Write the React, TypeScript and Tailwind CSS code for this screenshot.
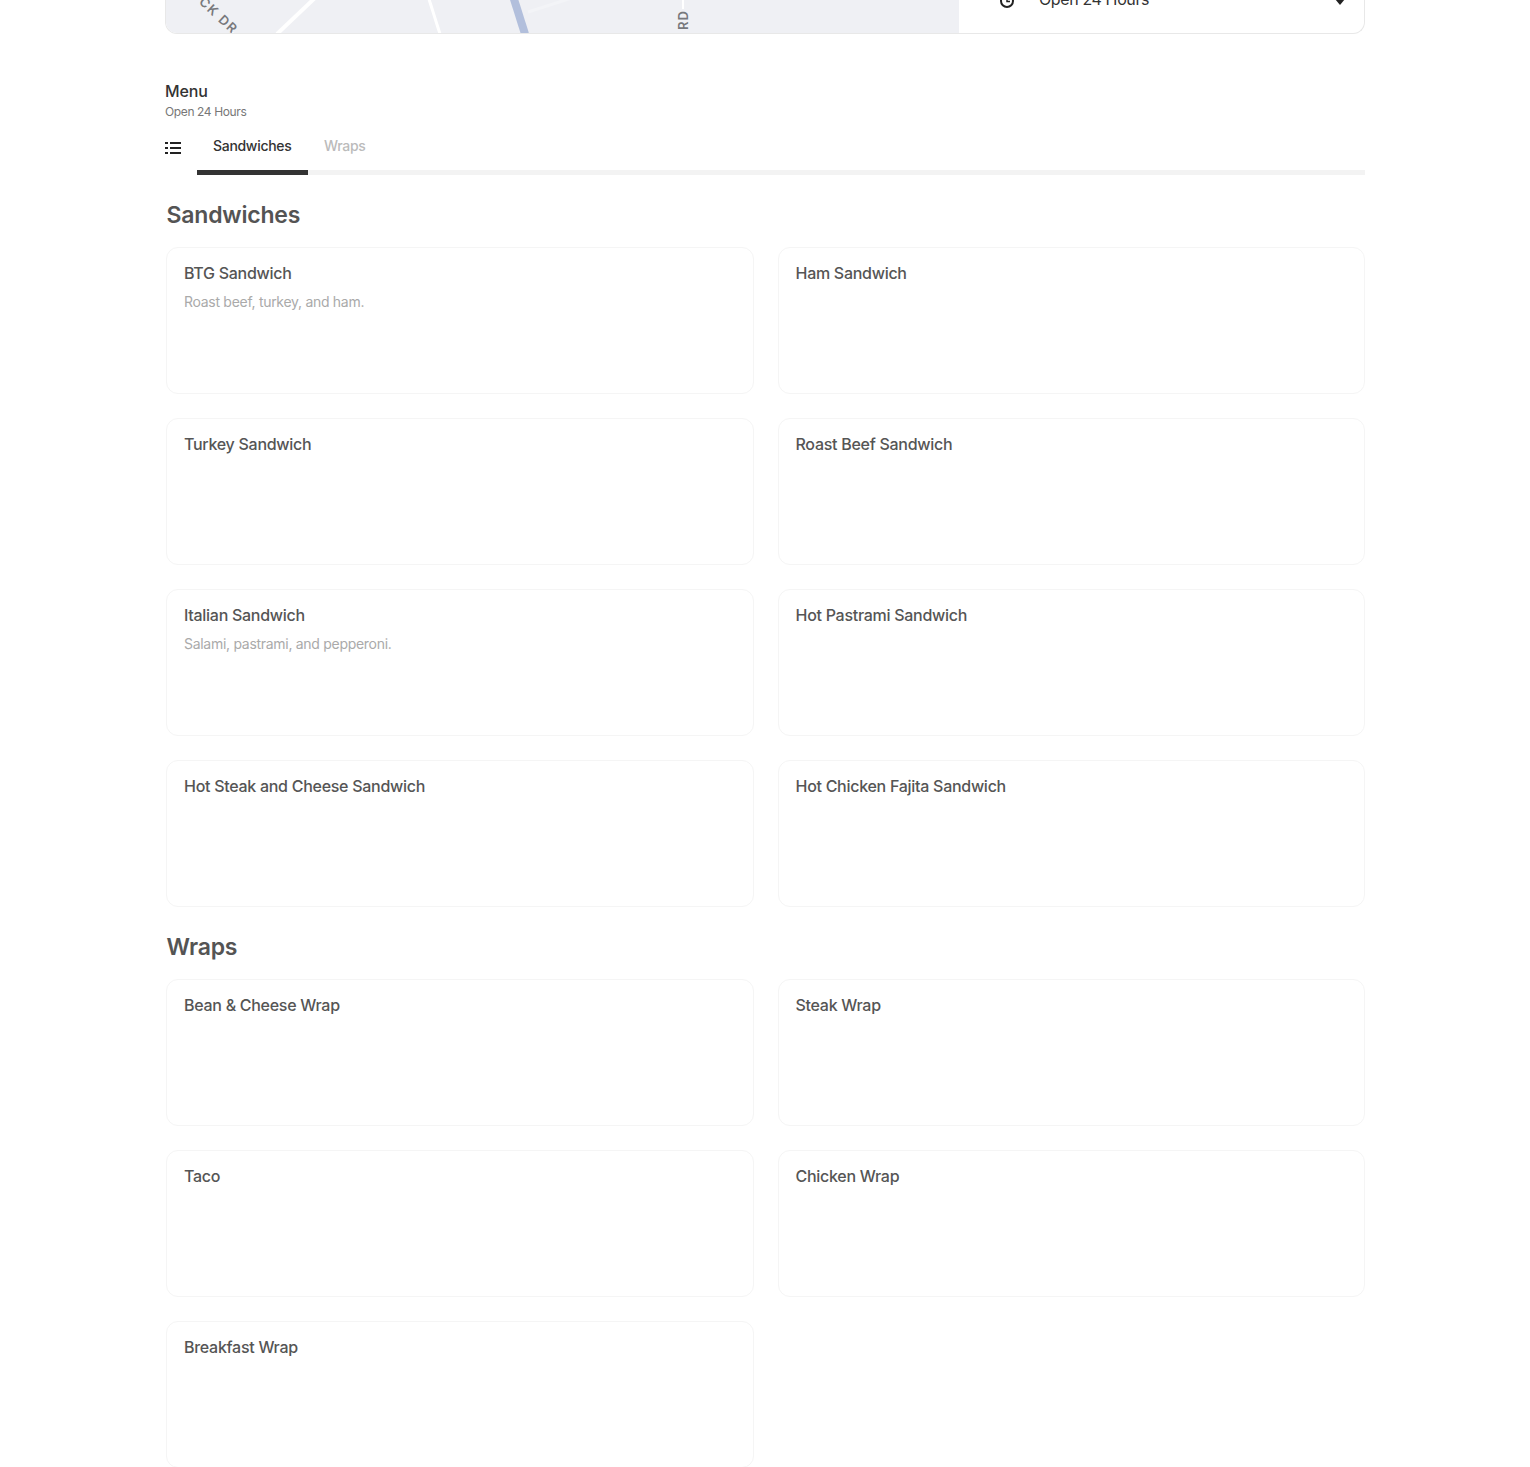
const sections = [
  {
    title: 'Sandwiches',
    items: [
      { name: 'BTG Sandwich', desc: 'Roast beef, turkey, and ham.' },
      { name: 'Ham Sandwich' },
      { name: 'Turkey Sandwich' },
      { name: 'Roast Beef Sandwich' },
      { name: 'Italian Sandwich', desc: 'Salami, pastrami, and pepperoni.' },
      { name: 'Hot Pastrami Sandwich' },
      { name: 'Hot Steak and Cheese Sandwich' },
      { name: 'Hot Chicken Fajita Sandwich' },
    ],
  },
  {
    title: 'Wraps',
    items: [
      { name: 'Bean & Cheese Wrap' },
      { name: 'Steak Wrap' },
      { name: 'Taco' },
      { name: 'Chicken Wrap' },
      { name: 'Breakfast Wrap' },
    ],
  },
];

function MapPiece() {
  return (
    <svg width="793" height="34" viewBox="0 0 793 34" className="block">
      <rect width="793" height="34" fill="#eff0f4" />
      <path d="M64 33 L72 37" stroke="#fff" strokeWidth="4" fill="none" />
      <path d="M111 34 L151 -4" stroke="#fff" strokeWidth="4" fill="none" />
      <path d="M262 -4 L274 34" stroke="#fff" strokeWidth="3" fill="none" />
      <path d="M517 0 V9" stroke="#fff" strokeWidth="2" fill="none" />
      <path d="M347 -4 L359 34" stroke="#b2bfdc" strokeWidth="8" fill="none" />
      <path d="M362 12 L412 -4" stroke="#f3f4f7" strokeWidth="3" fill="none" />
      <text x="0" y="0" transform="translate(24 -5) rotate(43)" fontSize="13" fontWeight="600" letterSpacing="1.4" fill="#77787c" fontFamily="Inter, sans-serif">OCK DR</text>
      <text x="0" y="0" transform="translate(522 30) rotate(-90)" fontSize="13" fontWeight="600" letterSpacing="1" fill="#77787c" fontFamily="Inter, sans-serif">RD</text>
    </svg>
  );
}

export default function App() {
  return (
    <div className="mx-auto w-[1200px] font-['Inter',sans-serif] h-[1467px] overflow-hidden">
      <div className="flex h-[34px] overflow-hidden rounded-b-[12px] border border-t-0 border-[#e8e8e8]">
        <div className="w-[793px] shrink-0">
          <MapPiece />
        </div>
        <div className="flex flex-1 items-start pl-[40px] pr-[19px] -mt-[11px] h-[20px] text-[#333]">
          <svg width="16" height="16" viewBox="0 0 16 16" className="mt-[4px]" fill="none" stroke="#222" strokeWidth="2">
            <circle cx="8" cy="8" r="6" />
            <path d="M8 4.5V8.5H11" strokeWidth="1.5" />
          </svg>
          <span className="ml-[24px] text-[16px] leading-[20px] tracking-[-0.38px]">Open 24 Hours</span>
          <svg width="10" height="6" viewBox="0 0 10 6" className="ml-auto mt-[10px]" fill="#222">
            <path d="M0 0H10L5 6Z" />
          </svg>
        </div>
      </div>

      <h2 className="mt-[47px] text-[16px] leading-[20px] font-medium text-[#333] tracking-[-0.1px]">Menu</h2>
      <p className="mt-[1px] text-[12px] leading-[20px] text-[#777] tracking-[-0.38px]">Open 24 Hours</p>

      <div className="mt-[10px] flex h-[43px]">
        <div className="w-[32px] pt-[9px]">
          <svg width="16" height="14" viewBox="0 0 16 14" fill="#222">
            <rect x="0" y="1" width="3" height="2" />
            <rect x="5" y="1" width="11" height="2" />
            <rect x="0" y="6" width="3" height="2" />
            <rect x="5" y="6" width="11" height="2" />
            <rect x="0" y="11" width="3" height="2" />
            <rect x="5" y="11" width="11" height="2" />
          </svg>
        </div>
        <div className="flex flex-1 border-b-[5px] border-[#f3f3f3] h-[43px]">
          <div className="-mb-[5px] h-[43px] w-[111px] border-b-[5px] border-[#333] pl-[16px] pt-[4px] text-[14px] leading-[20px] font-medium text-[#333] tracking-[-0.3px]">Sandwiches</div>
          <div className="px-[16px] pt-[4px] text-[14px] leading-[20px] font-medium text-[#bbb] tracking-[-0.3px]">Wraps</div>
        </div>
      </div>

      <div className="pl-[1px]">
        {sections.map((section) => (
          <section key={section.title}>
            <h3 className="mt-[24px] mb-[16px] ml-[0.5px] text-[23px] leading-[32px] font-semibold text-[#545454] tracking-[-0.2px]">
              {section.title}
            </h3>
            <div className="grid grid-cols-2 gap-[24px]">
              {section.items.map((item) => (
                <div key={item.name} className="h-[147px] rounded-[12px] border border-[#f5f5f5] px-[17px] pt-[15px]">
                  <div className="text-[16px] leading-[20px] font-medium text-[#555] tracking-[-0.28px]">{item.name}</div>
                  {item.desc && <div className="mt-[9px] text-[14px] leading-[20px] text-[#aaa] tracking-[-0.29px]">{item.desc}</div>}
                </div>
              ))}
            </div>
          </section>
        ))}
      </div>
    </div>
  );
}
